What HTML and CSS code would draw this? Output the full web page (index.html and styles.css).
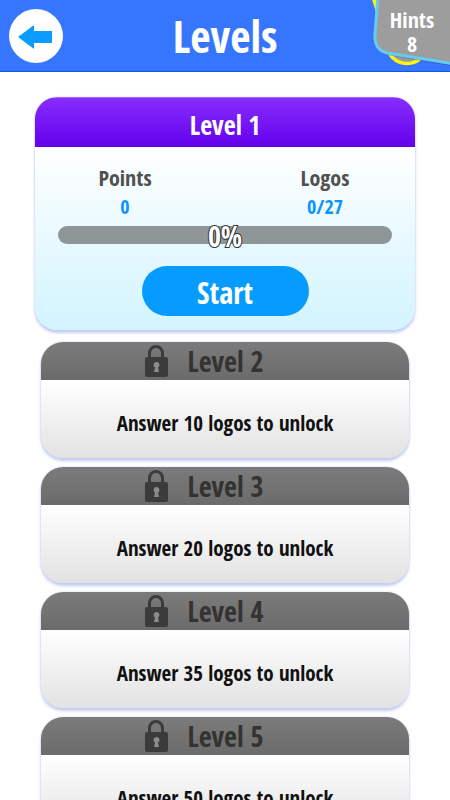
FILE: index.html
```html
<!DOCTYPE html>
<html lang="en">
<head>
<meta charset="utf-8">
<meta name="viewport" content="width=device-width, initial-scale=1">
<title>Levels</title>
<link rel="stylesheet" href="styles.css">
</head>
<body>
<svg class="defs" aria-hidden="true">
  <symbol id="lock" viewBox="0 0 24 32">
    <path d="M5.500 13V8a6.500 6.500 0 0 1 13 0v5" fill="none" stroke="#3b3b3b" stroke-width="3"/>
    <rect x="1" y="12" width="23" height="20" rx="2" fill="#3b3b3b"/>
    <path d="M12.500 17a3 3 0 0 0-1.500 5.600L10 27h5l-1-4.400a3 3 0 0 0-1.500-5.600z" fill="#8b8b8b"/>
  </symbol>
</svg>
<div class="app">
  <header class="topbar">
    <button class="back" type="button" aria-label="Back">
      <svg viewBox="0 0 54 54" aria-hidden="true"><path d="M9 28 25 16v6h18v12H25v6z" fill="#0a9dff"/></svg>
    </button>
    <h1 class="title">Levels</h1>
    <div class="hints">
      <svg class="hints-shape" viewBox="0 0 80 72" aria-hidden="true">
        <circle cx="37" cy="43" r="20.500" fill="#999" stroke="#f8f414" stroke-width="3.500"/>
        <path d="M3-4 8 12" stroke="#f8f414" stroke-width="4"/>
        <path d="M8-5 4 34Q3 52 17 55L88 67V-5z" fill="#15407e" opacity=".35"/>
        <path d="M8-5 5 34Q4 50 17 53L88 64.500V-5z" fill="#9d9d9d" stroke="#67cbee" stroke-width="3"/>
      </svg>
      <p class="hints-text"><span>Hints</span><span>8</span></p>
    </div>
  </header>
  <main class="list">
    <section class="card active">
      <h2 class="card-head">Level 1</h2>
      <div class="card-body">
        <dl class="stats">
          <div><dt>Points</dt><dd>0</dd></div>
          <div><dt>Logos</dt><dd>0/27</dd></div>
        </dl>
        <div class="progress" role="progressbar" aria-label="Level progress" aria-valuenow="0" aria-valuemin="0" aria-valuemax="100"><span>0%</span></div>
        <button class="start" type="button">Start</button>
      </div>
    </section>
    <section class="card locked">
      <h2 class="card-head"><svg class="lock" aria-hidden="true"><use href="#lock"/></svg>Level 2</h2>
      <p class="card-body">Answer 10 logos to unlock</p>
    </section>
    <section class="card locked">
      <h2 class="card-head"><svg class="lock" aria-hidden="true"><use href="#lock"/></svg>Level 3</h2>
      <p class="card-body">Answer 20 logos to unlock</p>
    </section>
    <section class="card locked">
      <h2 class="card-head"><svg class="lock" aria-hidden="true"><use href="#lock"/></svg>Level 4</h2>
      <p class="card-body">Answer 35 logos to unlock</p>
    </section>
    <section class="card locked">
      <h2 class="card-head"><svg class="lock" aria-hidden="true"><use href="#lock"/></svg>Level 5</h2>
      <p class="card-body">Answer 50 logos to unlock</p>
    </section>
  </main>
</div>
</body>
</html>
```
FILE: styles.css
```css
* {
  box-sizing: border-box;
}

body,
h1,
h2,
p,
dl,
dd {
  margin: 0;
}

body,
button {
  font-family: "Open Sans Condensed", "Liberation Sans Narrow", "Liberation Sans", sans-serif;
  font-weight: 700;
}

.defs {
  position: absolute;
  width: 0;
  height: 0;
}

.app {
  display: flex;
  flex-direction: column;
  height: 100vh;
  overflow: hidden;
  background: #fff;
}

.topbar {
  position: relative;
  display: grid;
  grid-template-columns: 63px 1fr 63px;
  align-items: center;
  flex: none;
  height: 72px;
  background: #3676ff;
  border-bottom: 1px solid #0c58e8;
}

.back {
  justify-self: end;
  width: 54px;
  height: 54px;
  padding: 0;
  border: 0;
  border-radius: 50%;
  background: #fff;
}

.back svg {
  display: block;
  width: 100%;
}

.title {
  color: #fff;
  font-size: 44px;
  line-height: 64px;
  text-align: center;
}

.hints {
  position: absolute;
  top: 0;
  right: 0;
  width: 80px;
  height: 71px;
  overflow: hidden;
}

.hints-shape {
  display: block;
  width: 80px;
  height: 72px;
}

.hints-text {
  position: absolute;
  top: 7px;
  right: 0;
  width: 76px;
  color: #fff;
  font-size: 22px;
  line-height: 24px;
  text-align: center;
}

.hints-text span {
  display: block;
}

.list {
  flex: 1;
  min-height: 0;
  overflow-y: auto;
  scrollbar-width: none;
  padding: 25px 35px;
}

.card {
  overflow: hidden;
  border-radius: 22px;
  box-shadow: 0 3px 3px #c3ccf0, 0 0 2px #c3ccf0;
}

.card-head {
  display: flex;
  align-items: center;
  justify-content: center;
  font-size: 28px;
}

.active {
  margin-bottom: 12px;
  background: linear-gradient(#fff 20%, #d2f4fe);
}

.active .card-head {
  height: 50px;
  padding-top: 4px;
  color: #fff;
  font-size: 26px;
  background: linear-gradient(#872dff, #6400ea);
  border-top: 1px solid #a466ff;
}

.active .card-body {
  padding: 16px 23px 14px;
}

.stats {
  display: grid;
  grid-template-columns: 1fr 1fr;
  gap: 66px;
  text-align: center;
}

.stats dt {
  color: #505050;
  font-size: 22px;
  line-height: 28px;
}

.stats dd {
  padding-top: 4px;
  color: #0a94ff;
  font-size: 20px;
  line-height: 24px;
}

.progress {
  height: 18px;
  margin: 7px 0 22px;
  border-radius: 9px;
  background: #8e9698;
  color: #fff;
  font-size: 28px;
  line-height: 20px;
  text-align: center;
  -webkit-text-stroke: 2px #333;
  paint-order: stroke fill;
}

.start {
  display: block;
  width: 50%;
  height: 50px;
  margin: 0 auto;
  padding: 3px 0 0;
  border: 0;
  border-radius: 25px;
  background: #069cff;
  color: #fff;
  font-size: 30px;
}

.locked {
  margin: 0 6px 9px;
}

.locked .card-head {
  gap: 19px;
  height: 38px;
  padding-right: 42px;
  color: #333;
  background: linear-gradient(#7b7b7b, #6b6b6b);
}

.lock {
  width: 24px;
  height: 32px;
}

.locked .card-body {
  padding: 28px 0 20px;
  background: linear-gradient(#fff, #e2e2e2);
  color: #111;
  font-size: 21px;
  line-height: 30px;
  text-align: center;
}
```
